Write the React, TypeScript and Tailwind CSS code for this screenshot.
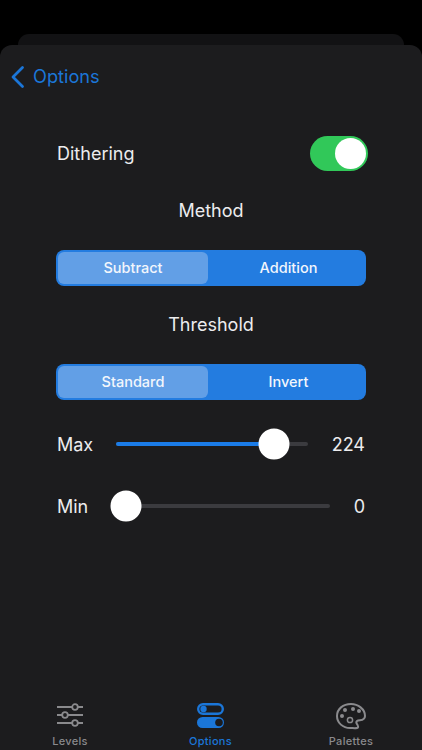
function Segment({ a, b }: { a: string; b: string }) {
  return (
    <div className="mx-[56px] flex h-[36px] rounded-[8px] bg-[#237ce0] p-[2px] text-[14.5px] font-medium text-[#f2f6fc]">
      <div className="flex w-[150px] items-center justify-center rounded-[6px] bg-[#629fe6]">{a}</div>
      <div className="flex flex-1 items-center justify-center pl-[5px]">{b}</div>
    </div>
  );
}

function Slider({ label, value, pct, labelClass, trackClass }: { label: string; value: string; pct: number; labelClass: string; trackClass: string }) {
  return (
    <div className="mx-[57px] flex h-[32px] items-center text-[18px] text-[#ececee]">
      <span className={labelClass}>{label}</span>
      <div className={`relative h-[4px] rounded-full bg-[#3b3b3f] ${trackClass}`}>
        <div className="h-full rounded-full bg-[#1b7ce8]" style={{ width: `${pct}%` }} />
        <div className="absolute top-1/2 h-[31px] w-[31px] -translate-x-1/2 -translate-y-1/2 rounded-full bg-white" style={{ left: `${pct}%` }} />
      </div>
      <span className="ml-auto">{value}</span>
    </div>
  );
}

function Tab({ label, active, children }: { label: string; active?: boolean; children: React.ReactNode }) {
  return (
    <div className={`flex w-[80px] flex-col items-center ${active ? "text-[#1b76d8]" : "text-[#8a8a8d]"}`}>
      <div className="h-[30px] w-[30px]">{children}</div>
      <span className="mt-[2px] text-[11px] leading-[14px] font-medium tracking-[0.3px]">{label}</span>
    </div>
  );
}

export default function App() {
  return (
    <div className="flex h-[750px] w-[422px] flex-col overflow-hidden bg-black pt-[34px] font-['Inter',sans-serif]">
      <div className="mx-[18px] h-[11px] shrink-0 rounded-t-[12px] bg-[#121214]" />
      <div className="flex flex-1 flex-col rounded-t-[12px] bg-[#1c1c1e]">
        <div className="mt-[20px] flex h-[24px] items-center pl-[10px] text-[18.2px] text-[#1b76d8]">
          <svg width="15" height="24" viewBox="0 0 15 24" fill="none" stroke="currentColor" strokeWidth="2.8" strokeLinecap="round" strokeLinejoin="round">
            <path d="M12.5 2.5 L3 12 L12.5 21.5" />
          </svg>
          <span className="ml-[8px]">Options</span>
        </div>
        <div className="mt-[47px] ml-[57px] mr-[54px] flex h-[35px] items-center justify-between text-[18px] text-[#ececee]">
          <span>Dithering</span>
          <div className="flex h-[35px] w-[58px] items-center justify-end rounded-full bg-[#31c859] pr-[2px]">
            <div className="h-[31px] w-[31px] rounded-full bg-white" />
          </div>
        </div>
        <div className="mt-[26px] text-center text-[18px] leading-[28px] text-[#ececee]">Method</div>
        <div className="mt-[25px]"><Segment a="Subtract" b="Addition" /></div>
        <div className="mt-[25px] text-center text-[18px] leading-[28px] text-[#ececee]">Threshold</div>
        <div className="mt-[25px]"><Segment a="Standard" b="Invert" /></div>
        <div className="mt-[28px]">
          <Slider label="Max" value="224" pct={82.5} labelClass="w-[59px]" trackClass="w-[192px]" />
        </div>
        <div className="mt-[30px]">
          <Slider label="Min" value="0" pct={0} labelClass="w-[68.5px]" trackClass="w-[204.5px]" />
        </div>
        <div className="mt-auto flex justify-between pr-[31px] pb-[2px] pl-[30px]">
          <Tab label="Levels">
            <svg viewBox="0 0 30 30" fill="none" stroke="currentColor" strokeWidth="1.8">
              <path d="M2 5H28M2 13H28M2 21H28" />
              <circle cx="20" cy="5" r="2.8" fill="#1c1c1e" />
              <circle cx="10" cy="13" r="2.8" fill="#1c1c1e" />
              <circle cx="20" cy="21" r="2.8" fill="#1c1c1e" />
            </svg>
          </Tab>
          <Tab label="Options" active>
            <svg viewBox="0 0 30 30" fill="none">
              <rect x="2.200" y="2.200" width="24.600" height="9.600" rx="4.800" stroke="currentColor" strokeWidth="2.400" />
              <circle cx="7.500" cy="7" r="3.200" fill="currentColor" />
              <rect x="1" y="15" width="27" height="11" rx="5.500" fill="currentColor" />
              <circle cx="23" cy="20.500" r="3.800" fill="#1c1c1e" />
            </svg>
          </Tab>
          <Tab label="Palettes">
            <svg viewBox="0 0 30 30" fill="none" stroke="currentColor" strokeWidth="2">
              <path d="M15 2C7 2 1 7 1 14c0 7 6 12 13 12 4 0 9 1 8-2-.6-2-3-3-1-5 2-1.500 8 .5 8-5 0-7-7-12-14-12Z" />
              <circle cx="14" cy="18" r="2.600" strokeWidth="1.500" />
              <circle cx="6" cy="14" r="2" fill="currentColor" stroke="none" />
              <circle cx="9" cy="8" r="2" fill="currentColor" stroke="none" />
              <circle cx="17" cy="7" r="2" fill="currentColor" stroke="none" />
              <circle cx="23" cy="9" r="2" fill="currentColor" stroke="none" />
            </svg>
          </Tab>
        </div>
      </div>
    </div>
  );
}
